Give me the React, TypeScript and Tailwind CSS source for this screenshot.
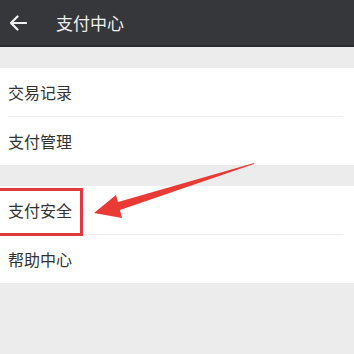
import React from 'react';

const font = { fontFamily: '"Noto Sans CJK SC", "Noto Sans", sans-serif' };

function Row({ label, divider }: { label: string; divider?: boolean }) {
  return (
    <div className="bg-white">
      <div className="h-[48px] flex items-center pl-[8px] text-[16px] text-[#333333]">{label}</div>
      {divider && <div className="h-px bg-[#ececec] ml-[8px] mr-[11px]" />}
    </div>
  );
}

export default function App() {
  return (
    <div className="relative w-[354px] h-[354px] overflow-hidden bg-[#ececec]" style={font}>
      <div className="h-[47px] bg-[#36373b] border-b-2 border-[#2a2b2e] flex items-center">
        <svg width="18" height="16" viewBox="0 0 18 16" className="ml-[9px]">
          <path d="M17 8H2M8.5 1.5 2 8l6.5 6.5" fill="none" stroke="#f2f2f2" strokeWidth="2.2" strokeLinecap="round" strokeLinejoin="round" />
        </svg>
        <span className="ml-[29px] text-[17px] text-[#eeeeee]">支付中心</span>
      </div>
      <div className="h-[21px]" />
      <Row label="交易记录" divider />
      <Row label="支付管理" />
      <div className="h-[21px]" />
      <Row label="支付安全" divider />
      <Row label="帮助中心" />

      {/* annotation */}
      <div className="absolute left-[-3px] top-[188px] w-[86px] h-[48px] border-[3px] border-[#e0393e]" />
      <svg className="absolute left-0 top-0" width="354" height="354" viewBox="0 0 354 354">
        <path d="M254 163 L118 202 L116 195 L94 213 L122 218 L120 210 L254 164 Z" fill="#ea3a35" />
      </svg>
    </div>
  );
}
